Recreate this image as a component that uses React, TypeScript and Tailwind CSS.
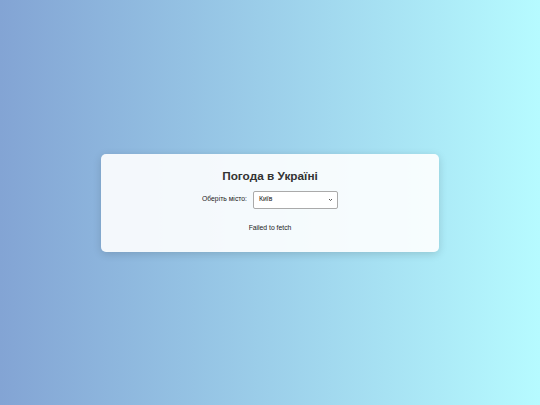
import React from "react";

export default function App() {
  return (
    <div
      className="w-[540px] h-[405px] flex items-center justify-center bg-gradient-to-r from-[#83a4d4] to-[#b6fbff]"
      style={{ fontFamily: '"Liberation Sans", Arial, sans-serif' }}
    >
      <div className="w-[338px] h-[98px] bg-white/90 rounded-[5px] shadow-[0_2px_8px_rgba(0,0,0,0.15)] flex flex-col items-center pt-[15px]">
        <h1 className="text-[11.8px] font-bold text-[#333] leading-[15px]">Погода в Україні</h1>
        <div className="flex items-center gap-[6px] mt-[7px]">
          <label className="text-[6.8px] text-[#222]">Оберіть місто:</label>
          <div className="w-[85px] h-[18px] bg-white border border-[#aaa] rounded-[2px] flex items-center justify-between pl-[5px] pr-[4px]">
            <span className="text-[6.8px] font-normal text-[#111]">Київ</span>
            <svg width="5" height="4" viewBox="0 0 5 4"><path d="M1 1 L2.5 2.5 L4 1" stroke="#444" strokeWidth="0.9" fill="none" /></svg>
          </div>
        </div>
        <p className="text-[6.8px] text-[#222] mt-[14px]">Failed to fetch</p>
      </div>
    </div>
  );
}
